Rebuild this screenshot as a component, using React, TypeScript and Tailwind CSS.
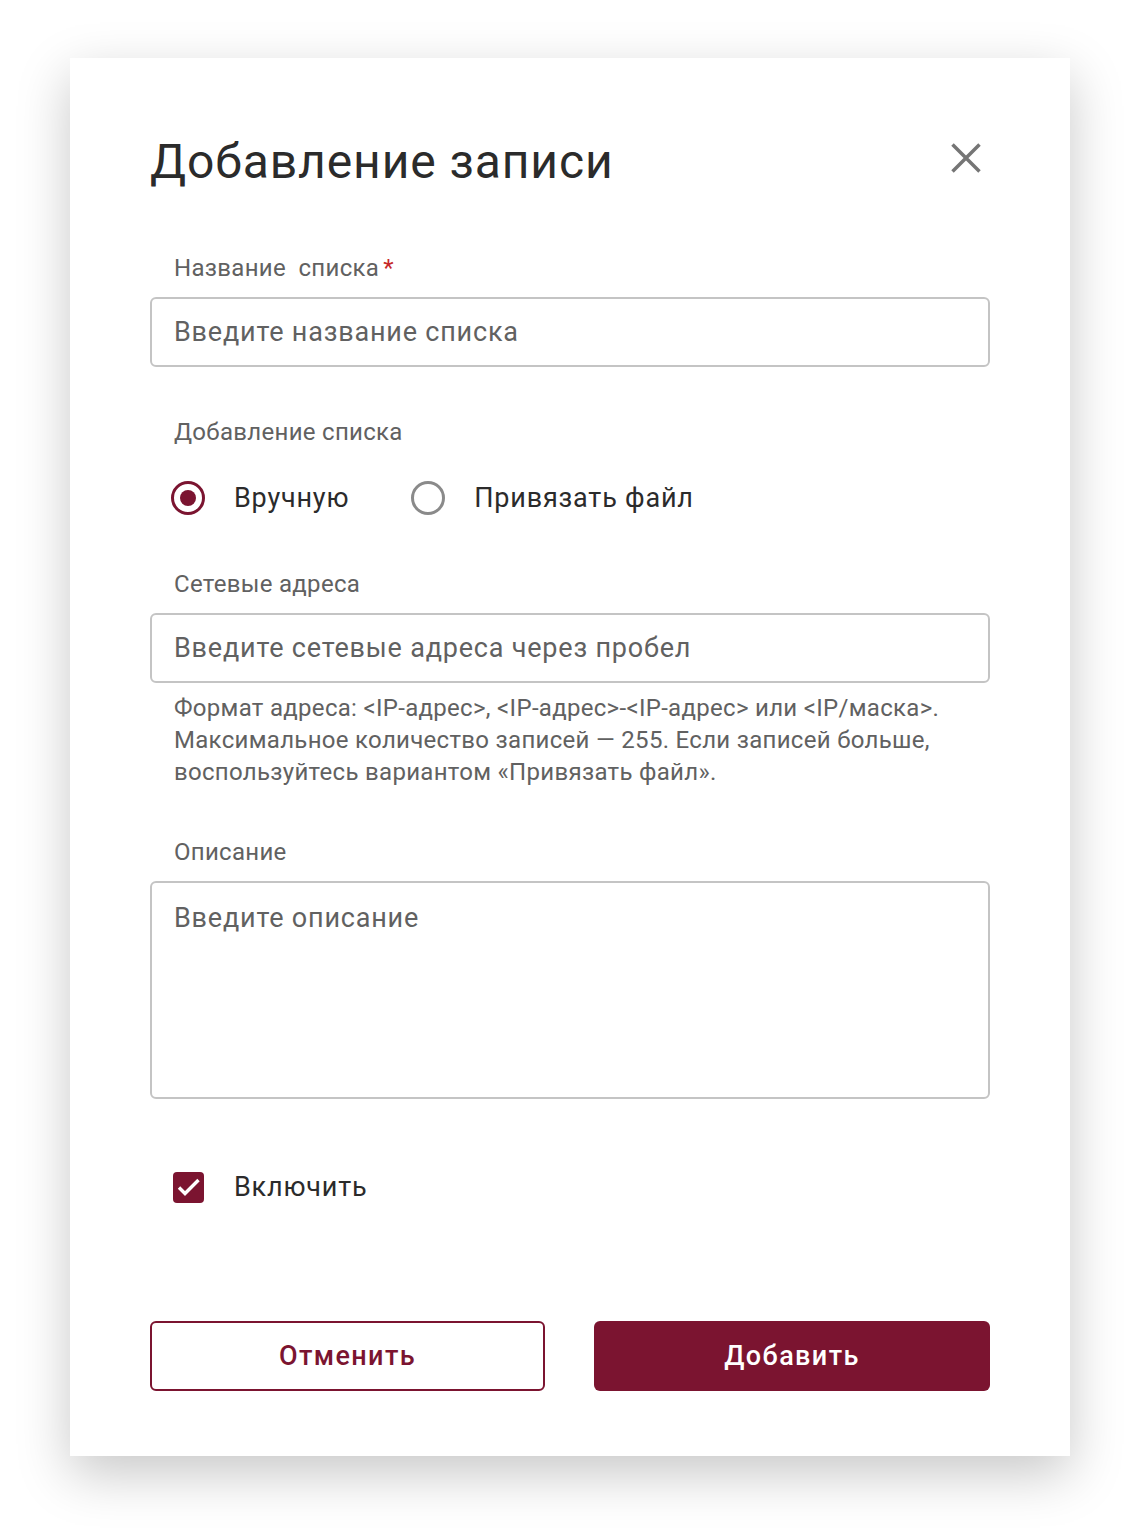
import { useState } from 'react';

const font = { fontFamily: 'Roboto, "Noto Sans", sans-serif' };

function Label({ children, required }: { children: React.ReactNode; required?: boolean }) {
  return (
    <div className="pl-6 text-[24px] leading-[28px] tracking-[0.3px] text-[#616161]">
      {children}
      {required && <span className="ml-1 text-[#c62828]">*</span>}
    </div>
  );
}

export default function App() {
  const [mode, setMode] = useState<'manual' | 'file'>('manual');
  const [enabled, setEnabled] = useState(true);

  return (
    <div className="min-h-[1540px] bg-white pt-[58px]" style={font}>
      <div className="mx-auto w-[1000px] bg-white px-20 pt-[76px] pb-[65px] shadow-[0_18px_50px_rgba(0,0,0,0.22)]">
        <div className="flex h-14 items-center justify-between">
          <h1 className="text-[48px] leading-[56px] tracking-[0.9px] text-[#2b2b2b]">Добавление записи</h1>
          <button className="mr-[3px] -mt-2 text-[#757575]" aria-label="Закрыть">
            <svg width="42" height="42" viewBox="0 0 24 24" fill="none" stroke="currentColor" strokeWidth="2" strokeLinecap="square">
              <path d="M5 5l14 14M19 5L5 19" />
            </svg>
          </button>
        </div>

        <div className="mt-16">
          <Label required>Название&nbsp; списка</Label>
          <input
            className="mt-[15px] h-[70px] w-full rounded-md border-2 border-[#c4c4c4] px-[22px] text-[27px] tracking-[0.8px] text-[#212121] outline-none placeholder:text-[#616161]"
            placeholder="Введите название списка"
          />
        </div>

        <div className="mt-[51px]">
          <Label>Добавление списка</Label>
          <div className="mt-8 flex h-10 items-center gap-[62px] pl-[21px]">
            <label className="flex cursor-pointer items-center gap-[29px]" onClick={() => setMode('manual')}>
              <span className={`flex h-[34px] w-[34px] items-center justify-center rounded-full border-[3px] ${mode === 'manual' ? 'border-[#7b1430]' : 'border-[#8a8a8a]'}`}>
                {mode === 'manual' && <span className="h-4 w-4 rounded-full bg-[#7b1430]" />}
              </span>
              <span className="text-[27px] tracking-[0.8px] text-[#2b2b2b]">Вручную</span>
            </label>
            <label className="flex cursor-pointer items-center gap-[29px]" onClick={() => setMode('file')}>
              <span className={`flex h-[34px] w-[34px] items-center justify-center rounded-full border-[3px] ${mode === 'file' ? 'border-[#7b1430]' : 'border-[#8a8a8a]'}`}>
                {mode === 'file' && <span className="h-4 w-4 rounded-full bg-[#7b1430]" />}
              </span>
              <span className="text-[27px] tracking-[0.8px] text-[#2b2b2b]">Привязать файл</span>
            </label>
          </div>
        </div>

        <div className="mt-[52px]">
          <Label>Сетевые адреса</Label>
          <input
            className="mt-[15px] h-[70px] w-full rounded-md border-2 border-[#c4c4c4] px-[22px] text-[27px] tracking-[0.8px] text-[#212121] outline-none placeholder:text-[#616161]"
            placeholder="Введите сетевые адреса через пробел"
          />
          <p className="mt-[9px] pl-6 text-[24px] leading-[32px] tracking-[0.3px] text-[#616161]">
            Формат адреса: &lt;IP-адрес&gt;, &lt;IP-адрес&gt;-&lt;IP-адрес&gt; или &lt;IP/маска&gt;.
            <br />
            Максимальное количество записей — 255. Если записей больше,
            <br />
            воспользуйтесь вариантом «Привязать файл».
          </p>
        </div>

        <div className="mt-[50px]">
          <Label>Описание</Label>
          <textarea
            className="mt-[15px] block h-[218px] w-full resize-none rounded-md border-2 border-[#c4c4c4] px-[22px] py-[17px] text-[27px] leading-[36px] tracking-[0.8px] text-[#212121] outline-none placeholder:text-[#616161]"
            placeholder="Введите описание"
          />
        </div>

        <label className="mt-[68px] flex h-10 cursor-pointer items-center gap-[30px] pl-[23px]" onClick={() => setEnabled(!enabled)}>
          <span className={`flex h-[31px] w-[31px] items-center justify-center rounded ${enabled ? 'bg-[#7b1430]' : 'border-2 border-[#8a8a8a]'}`}>
            {enabled && (
              <svg width="31" height="31" viewBox="0 0 31 31" fill="none" stroke="white" strokeWidth="3.4">
                <path d="M6 15.5l6 6L25.5 8" />
              </svg>
            )}
          </span>
          <span className="text-[27px] tracking-[0.8px] text-[#2b2b2b]">Включить</span>
        </label>

        <div className="mt-[114px] flex justify-between">
          <button className="h-[70px] w-[395px] rounded-md border-2 border-[#7b1430] text-[27px] font-medium tracking-[1.4px] text-[#7b1430]">
            Отменить
          </button>
          <button className="h-[70px] w-[396px] rounded-md bg-[#7b1430] text-[27px] font-medium tracking-[1.4px] text-white">
            Добавить
          </button>
        </div>
      </div>
    </div>
  );
}
